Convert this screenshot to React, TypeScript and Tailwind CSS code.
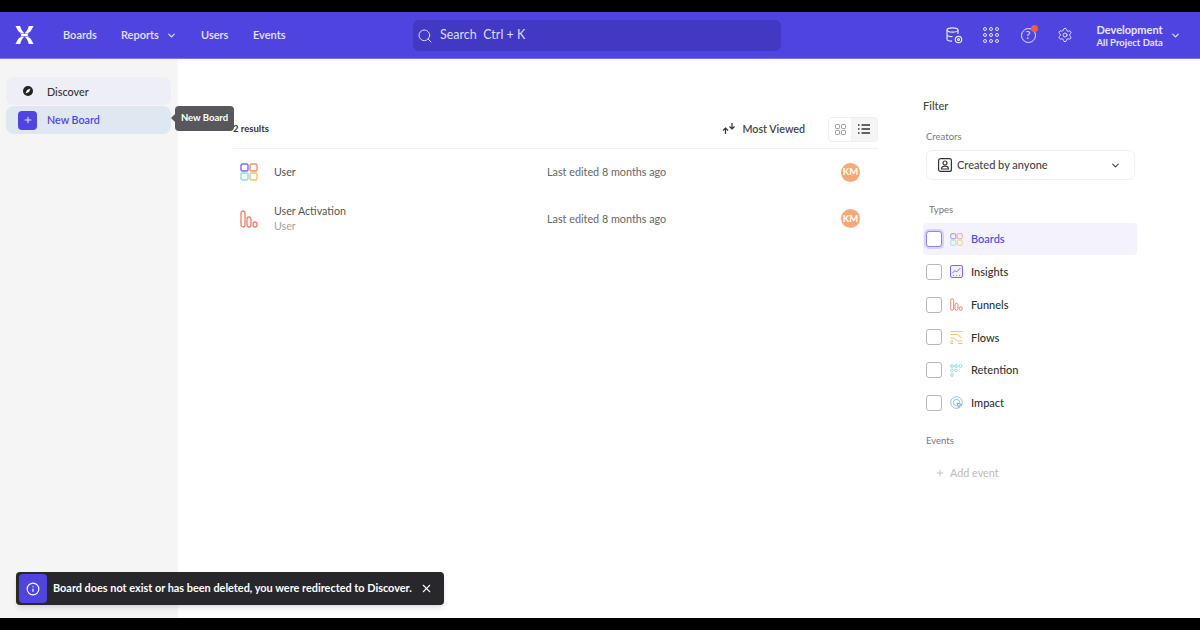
import React from 'react';
import { ChevronDown, Search, Plus, X, Info, Settings } from 'lucide-react';

const font = { fontFamily: 'Lato, sans-serif' };

const NavLink: React.FC<{ label: string; chevron?: boolean; width: string }> = ({ label, chevron, width }) => (
  <div className={`flex items-center gap-[7px] text-[11px] font-semibold text-[#e6e4fb] ${width}`}>
    <span>{label}</span>
    {chevron && <ChevronDown className="w-[11px] h-[11px]" strokeWidth={2.5} />}
  </div>
);

const Logo = () => (
  <svg width="19" height="18" viewBox="0 0 19 18" fill="white">
    <path d="M0.500 0h4.700c.8 3 2 5.500 4.300 7.400C7 7.800 4.500 6.500 3.400 5.300 2.400 3.800 1.300 1.800.5 0z" />
    <path d="M18.500 0h-4.700c-.8 3-2 5.500-4.300 7.400 2.500.4 5-.9 6.100-2.100 1-1.500 2.100-3.500 2.900-5.300z" />
    <path d="M0.500 18h4.700c.8-3 2-5.500 4.300-7.400C7 10.200 4.500 11.500 3.400 12.700 2.400 14.200 1.300 16.200.5 18z" />
    <path d="M18.500 18h-4.700c-.8-3-2-5.500-4.300-7.400 2.500-.4 5 .9 6.100 2.100 1 1.500 2.100 3.500 2.900 5.300z" />
    <path d="M4.500 6.500c2 1.400 3.500 1.400 5 1.400s3-.1 5-1.400c-1.200 1-1.800 1.700-1.800 2.500s.6 1.500 1.800 2.500c-2-1.300-3.500-1.400-5-1.400s-3 0-5 1.400c1.200-1 1.800-1.700 1.800-2.500s-.6-1.500-1.800-2.500z" />
  </svg>
);

const BoardsIcon: React.FC<{ size: number; muted?: boolean }> = ({ size, muted }) => (
  <svg width={size} height={size} viewBox="0 0 18 18" fill="none" strokeWidth={muted ? 1.3 : 1.4} opacity={muted ? 0.8 : 1}>
    <rect x="1" y="1" width="7" height="7" rx="1.500" stroke="#7a6ee8" />
    <rect x="10" y="1" width="7" height="7" rx="1.500" stroke="#e8907a" />
    <rect x="1" y="10" width="7" height="7" rx="1.500" stroke="#8fdcd8" />
    <rect x="10" y="10" width="7" height="7" rx="1.500" stroke="#f2c46d" />
  </svg>
);

const FunnelIcon: React.FC<{ size: number }> = ({ size }) => (
  <svg width={size} height={size} viewBox="0 0 18 18" fill="none" stroke="#e8806a" strokeWidth="1.300">
    <rect x="1" y="1" width="4" height="16" rx="2" />
    <rect x="7" y="7" width="4" height="10" rx="2" />
    <rect x="13" y="12" width="4" height="5" rx="2" />
  </svg>
);

const InsightsIcon = () => (
  <svg width="13" height="13" viewBox="0 0 13 13" fill="none" stroke="#7a6ee8" strokeWidth="1">
    <rect x="0.500" y="0.500" width="12" height="12" rx="1.500" fill="#f1effd" />
    <path d="M2.500 8 5 5.500l1.500 1.500 4-4" />
    <path d="M3 10.500h1M6 10.500h1M9 10.500h1" strokeWidth="0.800" />
  </svg>
);

const FlowsIcon = () => (
  <svg width="13" height="13" viewBox="0 0 13 13" fill="none" stroke="#f2c46d" strokeWidth="1">
    <path d="M0.500 0.500h12M0.500 12.500h3M8 12.500h4.500" />
    <path d="M0.500 3.500h7c2.500 0 1.500 3 4 3h1M0.500 7h3c2 0 2 3 4 3h5" />
    <circle cx="1.500" cy="10.500" r="1" />
  </svg>
);

const RetentionIcon = () => (
  <svg width="13" height="13" viewBox="0 0 13 13" fill="none" stroke="#8fdcd8" strokeWidth="1">
    <circle cx="2" cy="2" r="1.400" />
    <circle cx="6" cy="2" r="1.400" />
    <circle cx="10.500" cy="2" r="1.400" />
    <circle cx="2" cy="6.500" r="1.400" />
    <circle cx="6" cy="6.500" r="1.400" />
    <circle cx="2" cy="11" r="1.400" />
  </svg>
);

const ImpactIcon = () => (
  <svg width="13" height="13" viewBox="0 0 13 13" fill="none" stroke="#8fbfe8" strokeWidth="1">
    <circle cx="6.500" cy="6.500" r="5.800" />
    <circle cx="6.500" cy="6.500" r="3.200" />
    <path d="M7 7l4.500 1.500-2 1-1 2z" fill="white" stroke="#7aa8d8" />
  </svg>
);

const TypeRow: React.FC<{ label: string; icon: React.ReactNode; active?: boolean }> = ({ label, icon, active }) => (
  <div className={`flex items-center h-[32px] w-[214px] rounded pl-[3px] mb-[0.800px] ${active ? 'bg-[#f3f2fd]' : ''}`}>
    <div
      className={`w-[16px] h-[16px] rounded-[3px] border bg-white ${
        active ? 'border-[#8f86e8] ring-2 ring-[#d5d1f7]' : 'border-[#b8b8b8]'
      }`}
    />
    <div className="ml-[8px] w-[13px] h-[13px] flex items-center justify-center">{icon}</div>
    <span className={`ml-[8px] pt-px text-[11px] font-medium ${active ? 'text-[#4f44e0]' : 'text-[#333]'}`}>{label}</span>
  </div>
);

const ResultRow: React.FC<{ name: string; sub?: string; icon: React.ReactNode }> = ({ name, sub, icon }) => (
  <div className="flex items-center h-[46.500px] pl-[7px]">
    <div className="w-[18px] h-[18px] flex-shrink-0">{icon}</div>
    <div className="ml-[16px] w-[273px] pb-[2px]">
      <div className="text-[10.700px] leading-[15px] text-[#555]">{name}</div>
      {sub && <div className="text-[10.700px] leading-[15px] text-[#a3a3a3]">{sub}</div>}
    </div>
    <div className="text-[10.800px] text-[#666] w-[294px]">Last edited 8 months ago</div>
    <div className="w-[19px] h-[19px] rounded-full bg-[#f7a878] text-white text-[9.500px] font-bold flex items-center justify-center">
      KM
    </div>
  </div>
);

export default function App() {
  return (
    <div className="w-[1200px] h-[630px] bg-black flex flex-col pt-[12px] pb-[12px] overflow-hidden relative" style={font}>
      <header className="h-[47px] flex-shrink-0 bg-[#4f44e0] border-b border-[#7d75e8] flex items-center pl-[15px]">
        <Logo />
        <nav className="flex items-center ml-[29px] w-[350px] pt-px">
          <NavLink label="Boards" width="w-[58px]" />
          <NavLink label="Reports" chevron width="w-[80px]" />
          <NavLink label="Users" width="w-[52px]" />
          <NavLink label="Events" width="w-[40px]" />
        </nav>
        <div className="w-[368px] h-[31px] rounded-md bg-[#4238c4] flex items-center pl-[4px] pt-px text-[#dcdaf8] text-[12.500px] gap-[7px]">
          <Search className="w-[16px] h-[16px]" strokeWidth={1.5} />
          <span>Search&nbsp; Ctrl + K</span>
        </div>
        <div className="flex items-center ml-[165px] text-[#e6e4fb]">
          <svg width="17" height="17" viewBox="0 0 17 17" fill="none" stroke="currentColor" strokeWidth="1.200">
            <ellipse cx="6.500" cy="3" rx="5.500" ry="2.200" />
            <path d="M1 3v9c0 1.200 2.500 2.200 5 2.200M12 3v4M1 7.500c0 1.200 2.500 2.200 5.500 2.200" />
            <circle cx="12.500" cy="12.500" r="3.200" />
            <circle cx="12.500" cy="12.500" r="1" />
          </svg>
          <div className="ml-[20px] grid grid-cols-3 gap-[2.500px]">
            {[0, 1, 2, 3, 4, 5, 6, 7, 8].map((i) => (
              <div key={i} className="w-[3.500px] h-[3.500px] rounded-full border border-[#e6e4fb]" />
            ))}
          </div>
          <div className="ml-[22px] relative w-[15px] h-[15px] rounded-full border border-[#e6e4fb] flex items-center justify-center text-[11px]">
            ?
            <div className="absolute -top-[4px] -right-[3px] w-[7px] h-[7px] rounded-full bg-[#ee5d3f]" />
          </div>
          <Settings className="ml-[21px] w-[16px] h-[16px]" strokeWidth={1.4} />
          <div className="ml-[24px] w-[66px] pt-[2px] text-[11px] leading-[13px] font-bold whitespace-nowrap">
            <div>Development</div>
            <div className="text-[9.500px]">All Project Data</div>
          </div>
          <ChevronDown className="ml-[7px] w-[11px] h-[11px]" strokeWidth={2.5} />
        </div>
      </header>
      <main className="flex-1 flex bg-white min-h-0">
        <aside className="w-[178px] flex-shrink-0 bg-[#f5f5f5] pt-[18px] pl-[6px]">
          <div className="w-[165px] h-[28px] rounded-lg bg-[#eeeef6] flex items-center pl-[17px] pt-[3px] text-[10.800px] font-medium text-[#333]">
            <svg width="10" height="10" viewBox="0 0 10 10" className="-mt-[3px]">
              <circle cx="5" cy="5" r="5" fill="#222" />
              <path d="M7.500 2.500 6 6 2.500 7.500 4 4z" fill="white" />
            </svg>
            <span className="ml-[14px]">Discover</span>
          </div>
          <div className="w-[165px] h-[28px] mt-px rounded-lg bg-[#dfe8f0] flex items-center pl-[12px] text-[10.700px] text-[#4f44e0]">
            <div className="w-[19px] h-[19px] rounded bg-[#4f44e0] flex items-center justify-center">
              <Plus className="w-[10px] h-[10px] text-white" />
            </div>
            <span className="ml-[10px] font-semibold">New Board</span>
          </div>
        </aside>
        <section className="w-[645px] ml-[55px] pt-[60px]">
          <div className="flex items-center h-[30px] border-b border-[#f0f0f0] pb-[9px]">
            <span className="text-[9.500px] font-bold text-[#333]">2 results</span>
            <div className="ml-auto flex items-center gap-[7px] text-[#444] text-[10.700px] font-semibold">
              <svg width="14" height="13" viewBox="0 0 14 13" fill="none" stroke="#333" strokeWidth="1.200">
                <path d="M3.500 12V6M1 8.500 3.500 6 6 8.500M10 1v6M7.500 4.500 10 7l2.500-2.500" />
              </svg>
              <span>Most Viewed</span>
            </div>
            <div className="ml-[23px] flex w-[50px] h-[25px] border border-[#f0f0f0] rounded">
              <div className="w-[22px] flex items-center justify-center">
                <svg width="11" height="11" viewBox="0 0 11 11" fill="none" stroke="#999" strokeWidth="1">
                  <rect x="0.500" y="0.500" width="4" height="4" rx="0.800" />
                  <rect x="6.500" y="0.500" width="4" height="4" rx="0.800" />
                  <rect x="0.500" y="6.500" width="4" height="4" rx="0.800" />
                  <rect x="6.500" y="6.500" width="4" height="4" rx="0.800" />
                </svg>
              </div>
              <div className="flex-1 bg-[#f5f5f5] flex items-center justify-center">
                <svg width="12" height="10" viewBox="0 0 12 10" fill="none" stroke="#333" strokeWidth="1.400">
                  <path d="M3.500 1H12M3.500 5H12M3.500 9H12M0 1h1.500M0 5h1.500M0 9h1.500" />
                </svg>
              </div>
            </div>
          </div>
          <ResultRow name="User" icon={<BoardsIcon size={18} />} />
          <ResultRow name="User Activation" sub="User" icon={<FunnelIcon size={18} />} />
        </section>
        <aside className="ml-[45px] pt-[41px] w-[214px]">
          <div className="text-[11px] font-medium text-[#444] leading-[12px]">Filter</div>
          <div className="text-[9.500px] text-[#777] mt-[19px] ml-[3px] leading-[12px]">Creators</div>
          <div className="mt-[7px] ml-[3px] w-[209px] h-[30px] border border-[#f0f0f0] rounded-md flex items-center pl-[11px] pr-[13px] text-[11px] font-medium text-[#444]">
            <svg width="14" height="14" viewBox="0 0 14 14" fill="none" stroke="#333" strokeWidth="1.200">
              <rect x="0.600" y="0.600" width="12.800" height="12.800" rx="2" />
              <circle cx="7" cy="5" r="2" />
              <path d="M3.500 11c0-2 1.500-2.800 3.500-2.800s3.500.8 3.500 2.800z" />
            </svg>
            <span className="ml-[5px] pt-px">Created by anyone</span>
            <ChevronDown className="ml-auto w-[11px] h-[11px]" strokeWidth={2.5} />
          </div>
          <div className="text-[9.500px] text-[#777] mt-[24px] ml-[6px] leading-[12px]">Types</div>
          <div className="mt-[7px]">
            <TypeRow label="Boards" active icon={<BoardsIcon size={13} muted />} />
            <TypeRow label="Insights" icon={<InsightsIcon />} />
            <TypeRow label="Funnels" icon={<FunnelIcon size={13} />} />
            <TypeRow label="Flows" icon={<FlowsIcon />} />
            <TypeRow label="Retention" icon={<RetentionIcon />} />
            <TypeRow label="Impact" icon={<ImpactIcon />} />
          </div>
          <div className="text-[9.500px] text-[#777] mt-[16px] ml-[3px] leading-[12px]">Events</div>
          <div className="mt-[18px] ml-[12px] flex items-center gap-[5px] text-[10.800px] text-[#bbb]">
            <Plus className="w-[10px] h-[10px]" />
            <span>Add event</span>
          </div>
        </aside>
      </main>
      <div className="absolute left-[175px] top-[106px] h-[25px] w-[59px] rounded bg-[#58575c] text-white text-[9.500px] font-bold pb-[1px] flex items-center justify-center">
        New Board
        <div className="absolute -left-[4px] top-[8px] w-0 h-0 border-y-[4px] border-y-transparent border-r-[4px] border-r-[#58575c]" />
      </div>
      <div className="absolute left-[16px] top-[572px] w-[428px] h-[33px] rounded bg-[#28272c] shadow-md flex items-center pl-[3px] text-white text-[10.900px] font-bold">
        <div className="w-[28px] h-[29px] rounded-sm bg-[#4f44e0] flex items-center justify-center">
          <Info className="w-[14px] h-[14px]" />
        </div>
        <span className="ml-[6px] w-[367px] whitespace-nowrap">Board does not exist or has been deleted, you were redirected to Discover.</span>
        <X className="w-[13px] h-[13px]" strokeWidth={2} />
      </div>
    </div>
  );
}
